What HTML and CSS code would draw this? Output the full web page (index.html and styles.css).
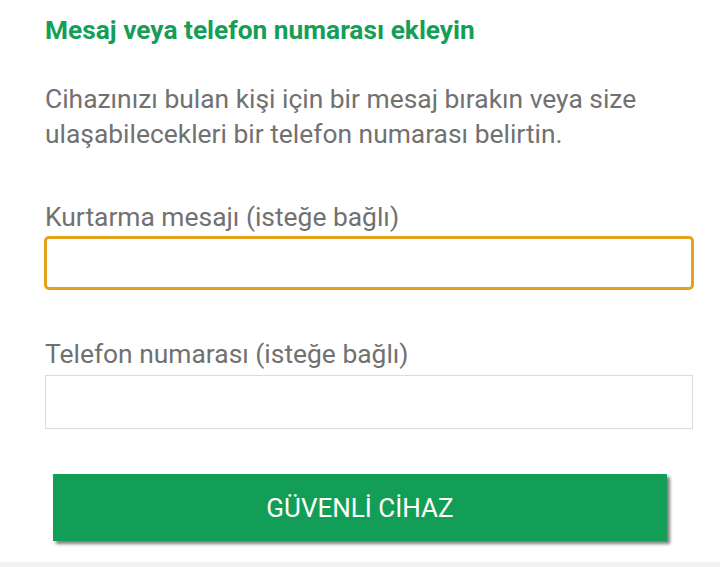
FILE: index.html
```html
<!DOCTYPE html>
<html lang="tr">
<head>
<meta charset="utf-8">
<link rel="stylesheet" href="styles.css">
</head>
<body>
<div class="page">
  <h1 class="title">Mesaj veya telefon numarası ekleyin</h1>
  <p class="desc">Cihazınızı bulan kişi için bir mesaj bırakın veya size ulaşabilecekleri bir telefon numarası belirtin.</p>
  <label class="label">Kurtarma mesajı (isteğe bağlı)</label>
  <div class="input focused"></div>
  <label class="label second">Telefon numarası (isteğe bağlı)</label>
  <div class="input"></div>
  <div class="btn-row"><button class="btn">GÜVENLİ CİHAZ</button></div>
</div>
<div class="bottom"></div>
</body>
</html>
```
FILE: styles.css
```css
html, body { margin: 0; padding: 0; background: #fff; }
body { width: 720px; height: 567px; overflow: hidden; position: relative; font-family: Roboto, "Noto Sans", sans-serif; }
.page { padding: 14px 27px 0 45px; display: flex; flex-direction: column; }
.title { margin: 0; font-size: 26.3px; font-weight: 700; color: #159e58; line-height: 32px; letter-spacing: 0; }
.desc { margin: 36px 0 0; font-size: 26.4px; color: #717171; line-height: 35px; }
.label { margin-top: 50px; font-size: 26.4px; color: #717171; line-height: 30px; display: block; }
.label.second { margin-top: 49px; }
.input { margin-top: 6px; border: 1px solid #dcdcdc; box-sizing: border-box; height: 54px; }
.input.focused { margin-top: 4px; border: 3px solid #e6a11c; border-radius: 5px; margin-left: -1px; margin-right: -1px; }
.btn-row { margin-top: 45px; padding: 0 0 0 8px; }
.btn { width: 614px; height: 67px; background: #139e57; border: none; color: #fff; font-family: Roboto, sans-serif; font-size: 26px; letter-spacing: 0; box-shadow: 3px 3px 3px rgba(0,0,0,0.5); display: block; padding: 0; }
.bottom { position: absolute; left: 0; right: 0; bottom: 0; height: 5px; background: #f2f2f2; }
```
